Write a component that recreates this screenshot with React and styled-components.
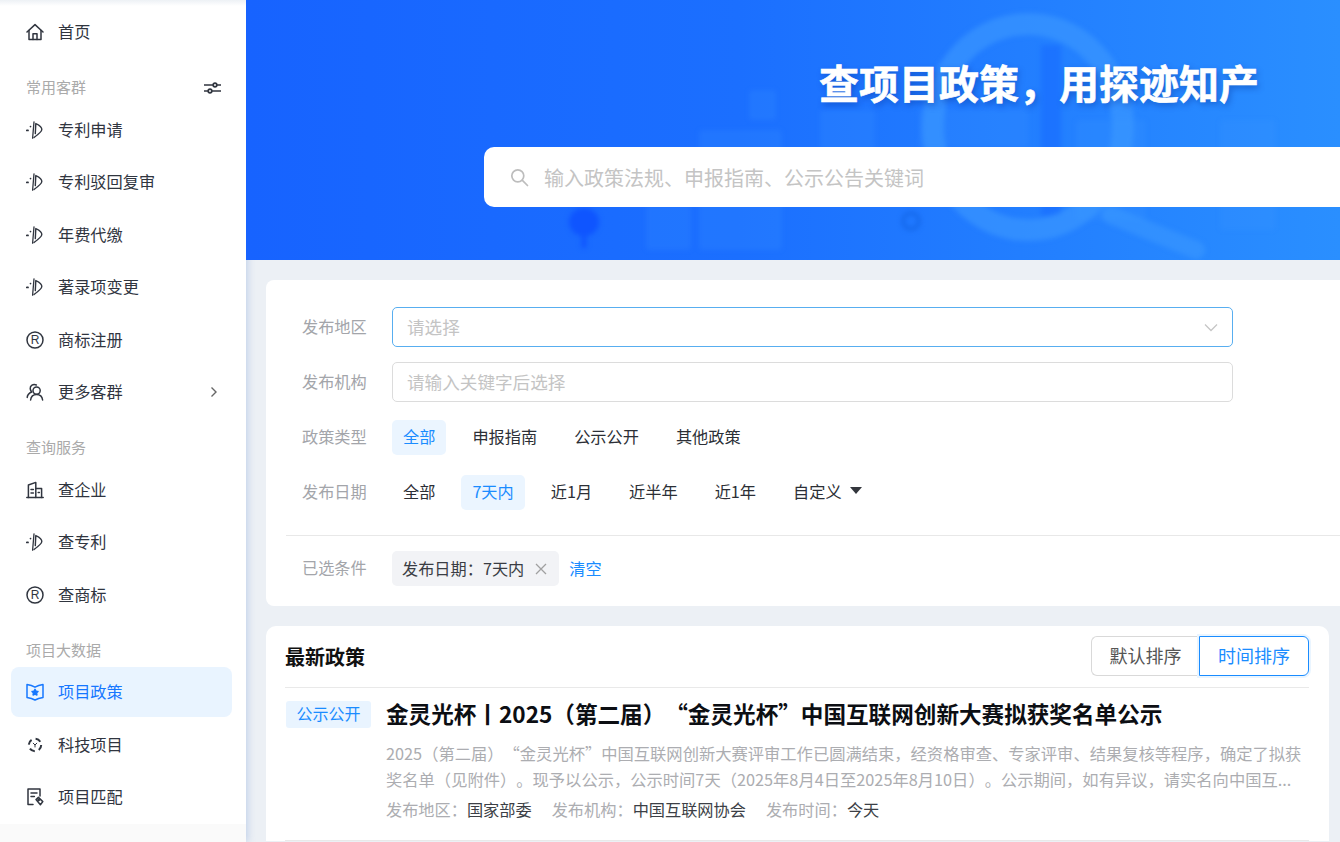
import React from "react";
import styled, { createGlobalStyle } from "styled-components";

const Global = createGlobalStyle`
  html, body { margin: 0; padding: 0; height: 100%; background: #ecf0f5; }
  body { font-family: "Noto Sans CJK SC", "Noto Sans", sans-serif; overflow: hidden; text-spacing-trim: space-all; }
  * { box-sizing: border-box; }
`;

const Page = styled.div`
  display: flex;
  width: 1340px;
  height: 842px;
  overflow: hidden;
  background: #ecf0f5;
`;
const SideColumn = styled.aside`
  flex: 0 0 246px;
  height: 842px;
  background: #fafafa;
  box-shadow: 2px 0 7px rgba(120, 155, 215, 0.35);
`;
const SideNav = styled.nav`
  height: 824px;
  padding: 7px 14px 0 11px;
  background: linear-gradient(180deg, #edf1f5 0, #ffffff 6px);
`;
const NavItem = styled.div`
  display: flex;
  align-items: center;
  gap: 14px;
  height: 50px;
  padding: 0 15px;
  border-radius: 8px;
  font-size: 16.2px;
  color: ${(p) => (p.$active ? "#1677ff" : "#30353f")};
  background: ${(p) => (p.$active ? "#e9f4ff" : "transparent")};
  & + & { margin-top: 2.5px; }
`;
const NavLabel = styled.span`
  flex: 1;
  padding-bottom: 2px;
`;
const NavIcon = styled.svg`
  flex: 0 0 18px;
  width: 18px;
  height: 18px;
  fill: none;
  stroke: currentColor;
  stroke-width: 1.5;
  stroke-linecap: round;
  stroke-linejoin: round;
`;
const Chevron = styled.svg`
  width: 8px;
  height: 12px;
  margin-right: -1px;
  fill: none;
  stroke: #666;
  stroke-width: 1.4;
`;
const GroupTitle = styled.div`
  display: flex;
  align-items: center;
  justify-content: space-between;
  height: 47.5px;
  padding: 14px 11px 2px 15px;
  font-size: 15px;
  color: #aaaaaa;
`;
const TuneIcon = styled.svg`
  width: 17px;
  height: 12px;
  margin-top: 2px;
  fill: #fff;
  stroke: #30353f;
  stroke-width: 1.7;
`;
const Main = styled.main`
  flex: 1;
  min-width: 0;
`;
const Hero = styled.header`
  position: relative;
  height: 260px;
  padding: 60px 0 0 238px;
  overflow: hidden;
  background: linear-gradient(90deg, #1763ff 0%, #1b6fff 45%, #2a8fff 100%);
`;
const HeroArt = styled.svg`
  position: absolute;
  left: 0;
  top: 0;
  width: 1094px;
  height: 260px;
  filter: blur(2.5px);
`;
const HeroInner = styled.div`
  position: relative;
  width: 1108px;
`;
const HeroTitle = styled.h1`
  margin: 0 0 33px;
  height: 54px;
  padding: 0 0 0 2px;
  font-size: 40px;
  font-weight: 700;
  line-height: 44px;
  text-align: center;
  color: #fff;
  -webkit-text-stroke: 0.6px #fff;
  text-shadow: 2px 3px 6px rgba(0, 40, 140, 0.4);
`;
const SearchBar = styled.div`
  display: flex;
  align-items: center;
  gap: 15px;
  height: 60px;
  padding: 0 26px;
  border-radius: 10px;
  background: #fff;
  font-size: 20px;
  color: #c4c4c4;
`;
const SearchIcon = styled.svg`
  width: 19px;
  height: 19px;
  fill: none;
  stroke: #bdbdbd;
  stroke-width: 1.7;
  stroke-linecap: round;
`;
const FilterCard = styled.section`
  width: 1300px;
  margin: 20px 0 0 20px;
  padding: 27px 0 20px 20px;
  border-radius: 8px;
  background: #fff;
`;
const FilterRow = styled.div`
  display: flex;
  align-items: center;
  margin-top: ${(p) => p.$top || 0}px;
  padding-left: 16px;
`;
const RowLabel = styled.div`
  flex: 0 0 90px;
  padding-bottom: 3px;
  font-size: 16.2px;
  color: #a3a5aa;
`;
const Field = styled.div`
  display: flex;
  align-items: center;
  justify-content: space-between;
  width: 841px;
  height: 40px;
  padding: 0 14px 2px;
  border: 1px solid ${(p) => (p.$focus ? "#58aef0" : "#dcdcdc")};
  border-radius: 5px;
  font-size: 17.6px;
  color: #c4c4c4;
`;
const FieldCaret = styled.svg`
  width: 14px;
  height: 9px;
  margin-top: 2px;
  fill: none;
  stroke: #c6c6c6;
  stroke-width: 1.3;
`;
const Options = styled.div`
  display: flex;
  gap: 15px;
`;
const Option = styled.div`
  display: flex;
  align-items: center;
  gap: 8px;
  height: 35px;
  padding: 0 11px 3px;
  border-radius: 5px;
  font-size: 16.2px;
  color: ${(p) => (p.$active ? "#1a8cff" : "#2c2f36")};
  background: ${(p) => (p.$active ? "#ebf5ff" : "transparent")};
`;
const DownCaret = styled.span`
  width: 0;
  height: 0;
  margin-top: -1px;
  border-left: 6px solid transparent;
  border-right: 6px solid transparent;
  border-top: 7px solid #33363d;
`;
const Divider = styled.div`
  height: 1px;
  margin: 25px 0 15px;
  background: #e8e8e8;
`;
const SelectedTag = styled.div`
  display: flex;
  align-items: center;
  gap: 11px;
  height: 35px;
  padding: 0 12px 2px 10px;
  border-radius: 5px;
  background: #f2f3f6;
  font-size: 16.2px;
  color: #3a3d44;
`;
const CloseIcon = styled.svg`
  width: 12px;
  height: 12px;
  margin-top: 2px;
  stroke: #a0a0a0;
  stroke-width: 1.3;
`;
const ClearLink = styled.a`
  margin-left: 10px;
  padding-bottom: 2px;
  font-size: 16.2px;
  color: #1a8cff;
`;
const ResultCard = styled.section`
  width: 1063px;
  margin: 20px 0 0 20px;
  padding: 0 20px 0 19px;
  border-radius: 10px 10px 0 0;
  background: #fff;
`;
const ResultHead = styled.div`
  display: flex;
  align-items: center;
  justify-content: space-between;
  height: 62px;
  padding-bottom: 1px;
  border-bottom: 1px solid #e9e9e9;
`;
const ResultTitle = styled.h2`
  margin: 0;
  font-size: 20px;
  font-weight: 700;
  color: #111;
`;
const SortGroup = styled.div`
  display: flex;
`;
const SortButton = styled.div`
  display: flex;
  align-items: center;
  justify-content: center;
  height: 40px;
  padding-bottom: 2px;
  font-size: 18px;
  border: 1px solid ${(p) => (p.$active ? "#1a8cff" : "#d9d9d9")};
  color: ${(p) => (p.$active ? "#1a8cff" : "#555")};
  width: ${(p) => (p.$active ? 110 : 108)}px;
  border-radius: ${(p) => (p.$active ? "0 6px 6px 0" : "6px 0 0 6px")};
  border-right-width: ${(p) => (p.$active ? 1 : 0)}px;
  box-shadow: ${(p) => (p.$active ? "0 0 0 2px #eaf5ff" : "none")};
`;
const Item = styled.article`
  display: flex;
  gap: 15px;
  padding: 13px 0 19px 1px;
  border-bottom: 1px solid #e9e9e9;
`;
const ItemTag = styled.div`
  flex: 0 0 85px;
  height: 27px;
  line-height: 25px;
  text-align: center;
  border-radius: 3px;
  background: #e9f4ff;
  font-size: 16px;
  color: #1a8cff;
`;
const ItemBody = styled.div`
  flex: 1;
  min-width: 0;
`;
const ItemTitle = styled.h3`
  margin: 0 0 8px;
  height: 31px;
  line-height: 26px;
  font-size: 22.6px;
  font-weight: 700;
  color: #0c0e13;
  white-space: nowrap;
`;
const ItemText = styled.p`
  margin: 0 0 5px;
  font-size: 16.3px;
  line-height: 26px;
  color: #acadb1;
`;
const Meta = styled.div`
  display: flex;
  gap: 20px;
  line-height: 24px;
  font-size: 16.2px;
`;
const MetaField = styled.div`
  display: flex;
`;
const MetaKey = styled.span`
  color: #acadb1;
`;
const MetaValue = styled.span`
  color: #3c3f46;
`;

const HomeIcon = () => (
  <NavIcon viewBox="0 0 18 18">
    <path d="M1 9 9 1.6 17 9" />
    <path d="M3 7.4V16.4H15V7.4" />
    <path d="M7 16.4V10.8H11V16.4" />
  </NavIcon>
);
const PatentIcon = () => (
  <NavIcon viewBox="0 0 18 18">
    <path d="M0.8 9.4H2" strokeWidth="1.8" />
    <path d="M4.4 5.6h.2" strokeWidth="1.6" />
    <path d="M8 .8 6.6 17.2" strokeWidth="1.3" />
    <path d="M9.8 2.6 9.3 12.6M9.8 2.6C13 4 16 6.6 15.8 8.8 15.6 11 11.5 14 8 16.5" strokeWidth="1.4" />
  </NavIcon>
);
const RegIcon = () => (
  <NavIcon viewBox="0 0 18 18">
    <circle cx="9" cy="9" r="8" />
    <text x="9" y="13.2" textAnchor="middle" fontSize="12" fontFamily="Liberation Sans, sans-serif" fill="currentColor" stroke="none">R</text>
  </NavIcon>
);
const UsersIcon = () => (
  <NavIcon viewBox="0 0 18 18">
    <circle cx="10.6" cy="7.6" r="3.6" />
    <path d="M4.6 17C5 13.6 7.6 11.6 10.6 11.6S16.2 13.6 16.6 17" />
    <path d="M10.4 2C7 .6 4 2.6 4.2 5.6 4.3 7 5 8.2 5.8 9 3.2 10 1.4 12 1.2 14.4" />
  </NavIcon>
);
const BuildingIcon = () => (
  <NavIcon viewBox="0 0 18 18">
    <path d="M.8 16.6H17.2" />
    <path d="M2.4 16.6V4L9.8 1.4V16.6" />
    <path d="M9.8 7.6H15.6V16.6" />
    <path d="M5 8.6H7.4M5 12H7.4M12.2 11.4H13.4" />
  </NavIcon>
);
const PolicyIcon = () => (
  <NavIcon viewBox="0 0 18 18">
    <path d="M1 1.6C4 2 6.6 2.8 9 4.2 11.4 2.8 14 2 17 1.6V14.6C14 15 11.2 15.8 9 17 6.8 15.8 4 15 1 14.6Z" />
    <path d="M9 6.4 10 8.2 12 8.5 10.5 10 10.9 12 9 11 7.1 12 7.5 10 6 8.5 8 8.2Z" fill="currentColor" />
  </NavIcon>
);
const TechIcon = () => (
  <NavIcon viewBox="0 0 18 18">
    <circle cx="9" cy="9" r="6.2" strokeWidth="2" strokeDasharray="5.5 4.2" strokeLinecap="butt" />
    <path d="M7.2 7.2 9 9 10.8 7.2M9 9V11" strokeWidth="1" />
  </NavIcon>
);
const MatchIcon = () => (
  <NavIcon viewBox="0 0 18 18">
    <path d="M7 16.6H2V1H14V8" />
    <path d="M5 5H11M5 8.4H8.4" />
    <path d="M10 11.6 12.4 9.4 16.8 13.6 14.4 16.8Z" />
    <circle cx="12.6" cy="12" r=".7" />
  </NavIcon>
);

const nav = [
  { text: "首页", Icon: HomeIcon },
  { title: "常用客群", tune: true },
  { text: "专利申请", Icon: PatentIcon },
  { text: "专利驳回复审", Icon: PatentIcon },
  { text: "年费代缴", Icon: PatentIcon },
  { text: "著录项变更", Icon: PatentIcon },
  { text: "商标注册", Icon: RegIcon },
  { text: "更多客群", Icon: UsersIcon, more: true },
  { title: "查询服务" },
  { text: "查企业", Icon: BuildingIcon },
  { text: "查专利", Icon: PatentIcon },
  { text: "查商标", Icon: RegIcon },
  { title: "项目大数据" },
  { text: "项目政策", Icon: PolicyIcon, active: true },
  { text: "科技项目", Icon: TechIcon },
  { text: "项目匹配", Icon: MatchIcon },
];

const desc =
  "2025（第二届）“金灵光杯”中国互联网创新大赛评审工作已圆满结束，经资格审查、专家评审、结果复核等程序，确定了拟获奖名单（见附件）。现予以公示，公示时间7天（2025年8月4日至2025年8月10日）。公示期间，如有异议，请实名向中国互...";

export default function App() {
  return (
    <Page>
      <Global />
      <SideColumn>
        <SideNav>
          {nav.map((n) =>
            n.title ? (
              <GroupTitle key={n.title}>
                {n.title}
                {n.tune && (
                  <TuneIcon viewBox="0 0 17 12">
                    <path d="M0 3H17M0 9H17" />
                    <circle cx="11" cy="3" r="1.8" />
                    <circle cx="6" cy="9" r="1.8" />
                  </TuneIcon>
                )}
              </GroupTitle>
            ) : (
              <NavItem key={n.text} $active={n.active}>
                <n.Icon />
                <NavLabel>{n.text}</NavLabel>
                {n.more && (
                  <Chevron viewBox="0 0 8 12">
                    <path d="M1.5 1.5 6 6 1.5 10.5" />
                  </Chevron>
                )}
              </NavItem>
            )
          )}
        </SideNav>
      </SideColumn>
      <Main>
        <Hero>
          <HeroArt viewBox="0 0 1094 260">
            <g fill="#3f97ff" opacity="0.2">
              <rect x="453" y="130" width="83" height="120" rx="4" />
              <rect x="503" y="90" width="27" height="30" rx="3" />
              <rect x="574" y="110" width="55" height="40" rx="3" />
              <rect x="400" y="205" width="45" height="45" rx="4" />
              <rect x="673" y="110" width="109" height="37" rx="3" />
              <rect x="974" y="120" width="55" height="110" rx="4" />
              <rect x="830" y="120" width="70" height="100" rx="4" />
            </g>
            <path d="M795 45 815 45 815 216 795 216Z" fill="#176aff" opacity="0.6" />
            <ellipse cx="782" cy="127" rx="95" ry="103" fill="none" stroke="#3d9aff" strokeWidth="22" opacity="0.6" />
            <path d="M865 215 950 250" stroke="#3d9aff" strokeWidth="18" strokeLinecap="round" opacity="0.55" />
            <circle cx="665" cy="221" r="8" fill="none" stroke="#1366e8" strokeWidth="3" />
            <ellipse cx="338" cy="222" rx="15" ry="14" fill="#0f55ff" />
            <path d="M338 225V248" stroke="#0f55ff" strokeWidth="5" />
          </HeroArt>
          <HeroInner>
            <HeroTitle>查项目政策，用探迹知产</HeroTitle>
            <SearchBar>
              <SearchIcon viewBox="0 0 19 19">
                <circle cx="7.8" cy="7.8" r="6" />
                <path d="M12.4 12.4 17.5 17.5" />
              </SearchIcon>
              输入政策法规、申报指南、公示公告关键词
            </SearchBar>
          </HeroInner>
        </Hero>

        <FilterCard>
          <FilterRow>
            <RowLabel>发布地区</RowLabel>
            <Field $focus>
              请选择
              <FieldCaret viewBox="0 0 14 9">
                <path d="M1 1.5 7 7.5 13 1.5" />
              </FieldCaret>
            </Field>
          </FilterRow>
          <FilterRow $top={15}>
            <RowLabel>发布机构</RowLabel>
            <Field>请输入关键字后选择</Field>
          </FilterRow>
          <FilterRow $top={18}>
            <RowLabel>政策类型</RowLabel>
            <Options>
              <Option $active>全部</Option>
              <Option>申报指南</Option>
              <Option>公示公开</Option>
              <Option>其他政策</Option>
            </Options>
          </FilterRow>
          <FilterRow $top={20}>
            <RowLabel>发布日期</RowLabel>
            <Options>
              <Option>全部</Option>
              <Option $active>7天内</Option>
              <Option>近1月</Option>
              <Option>近半年</Option>
              <Option>近1年</Option>
              <Option>
                自定义
                <DownCaret />
              </Option>
            </Options>
          </FilterRow>
          <Divider />
          <FilterRow>
            <RowLabel>已选条件</RowLabel>
            <SelectedTag>
              发布日期：7天内
              <CloseIcon viewBox="0 0 12 12">
                <path d="M1 1 11 11M11 1 1 11" />
              </CloseIcon>
            </SelectedTag>
            <ClearLink>清空</ClearLink>
          </FilterRow>
        </FilterCard>

        <ResultCard>
          <ResultHead>
            <ResultTitle>最新政策</ResultTitle>
            <SortGroup>
              <SortButton>默认排序</SortButton>
              <SortButton $active>时间排序</SortButton>
            </SortGroup>
          </ResultHead>
          <Item>
            <ItemTag>公示公开</ItemTag>
            <ItemBody>
              <ItemTitle>金灵光杯丨2025（第二届）“金灵光杯”中国互联网创新大赛拟获奖名单公示</ItemTitle>
              <ItemText>{desc}</ItemText>
              <Meta>
                <MetaField><MetaKey>发布地区：</MetaKey><MetaValue>国家部委</MetaValue></MetaField>
                <MetaField><MetaKey>发布机构：</MetaKey><MetaValue>中国互联网协会</MetaValue></MetaField>
                <MetaField><MetaKey>发布时间：</MetaKey><MetaValue>今天</MetaValue></MetaField>
              </Meta>
            </ItemBody>
          </Item>
        </ResultCard>
      </Main>
    </Page>
  );
}
